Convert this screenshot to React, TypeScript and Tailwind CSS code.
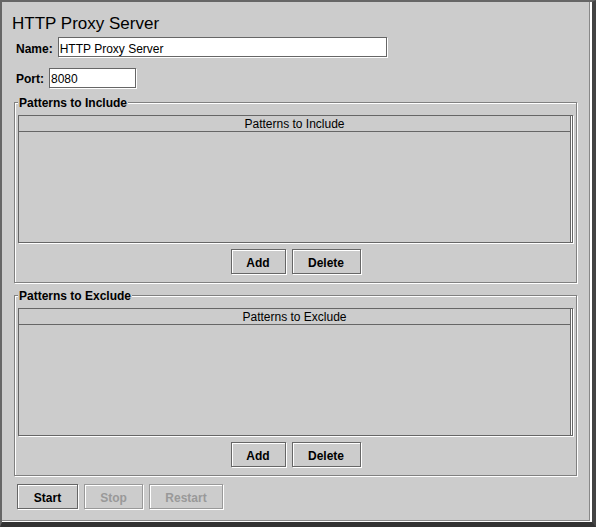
import React from 'react';

// Metal-style flush 3D box: dark outline with a white line offset by one pixel
const flush = 'shadow-[inset_1px_1px_0_#fff,1px_1px_0_#fff]';

const MetalButton: React.FC<{ label: string; width: string; disabled?: boolean }> = ({ label, width, disabled }) => (
    <button
        type="button"
        disabled={disabled}
        className={`${width} h-[25px] border ${flush} flex items-center justify-center pt-[2px] text-[12px] leading-[14px] font-bold ${
            disabled ? 'border-[#999] text-[#999]' : 'border-[#666] text-black'
        }`}
    >
        {label}
    </button>
);

const PatternGroup: React.FC<{ title: string; className?: string }> = ({ title, className }) => (
    <div className={`relative h-[181px] border border-[#808080] ${flush} px-[3px] pt-[12px] flex flex-col ${className ?? ''}`}>
        {/* legend sits over the etched line */}
        <span className="absolute left-[3px] top-[-7px] bg-[#cccccc] pl-[1px] pr-[1px] text-[12px] leading-[14px] font-bold">
            {title}
        </span>

        {/* table scroll pane */}
        <div className="h-[128px] border border-[#666] shadow-[1px_1px_0_#fff] flex">
            <div className="w-[552px] flex flex-col border-r border-[#666] shadow-[1px_0_0_#fff]">
                <div className="h-[16px] border-b border-[#666] text-center text-[12px] leading-[13px] pt-[2px]">
                    {title}
                </div>
                <div className="flex-1" />
            </div>
        </div>

        <div className="mt-[6px] flex justify-center gap-[6px]">
            <MetalButton label="Add" width="w-[55px]" />
            <MetalButton label="Delete" width="w-[69px]" />
        </div>
    </div>
);

export default function App() {
    return (
        <div className="w-[596px] h-[527px] flex bg-[#cccccc] text-black font-['Liberation_Sans',Arial,sans-serif] border-t-2 border-l-2 border-r-4 border-b-[5px] border-t-[#666] border-l-[#666] border-r-[#444] border-b-[#333]">
            <div className="flex-1 flex border-r-2 border-b border-white">
                <div className="flex-1 flex flex-col border-r border-b border-[#888] px-[12px]">
                    {/* Title */}
                    <div className="-ml-[2px] mt-[12px] text-[17px] leading-[20px]">HTTP Proxy Server</div>

                    {/* Name */}
                    <div className="mt-[3px] ml-[2px] h-[20px] flex items-start">
                        <span className="mt-[5px] text-[12px] leading-[14px] font-bold">Name:</span>
                        <div className="ml-[5px] w-[329px] h-[20px] border border-[#666] bg-white shadow-[1px_1px_0_#fff] pl-[1px] pt-[4px] text-[12px] leading-[14px]">
                            HTTP Proxy Server
                        </div>
                    </div>

                    {/* Port */}
                    <div className="mt-[11px] ml-[2px] h-[20px] flex items-start">
                        <span className="mt-[4px] text-[12px] leading-[14px] font-bold">Port:</span>
                        <div className="ml-[5px] w-[87px] h-[20px] border border-[#666] bg-white shadow-[1px_1px_0_#fff] pl-[1px] pt-[3px] text-[12px] leading-[14px]">
                            8080
                        </div>
                    </div>

                    <PatternGroup title="Patterns to Include" className="mt-[14px]" />
                    <PatternGroup title="Patterns to Exclude" className="mt-[12px]" />

                    {/* Proxy controls */}
                    <div className="mt-[8px] ml-[3px] flex gap-[6px]">
                        <MetalButton label="Start" width="w-[61px]" />
                        <MetalButton label="Stop" width="w-[59px]" disabled />
                        <MetalButton label="Restart" width="w-[74px]" disabled />
                    </div>
                </div>
            </div>
        </div>
    );
}
